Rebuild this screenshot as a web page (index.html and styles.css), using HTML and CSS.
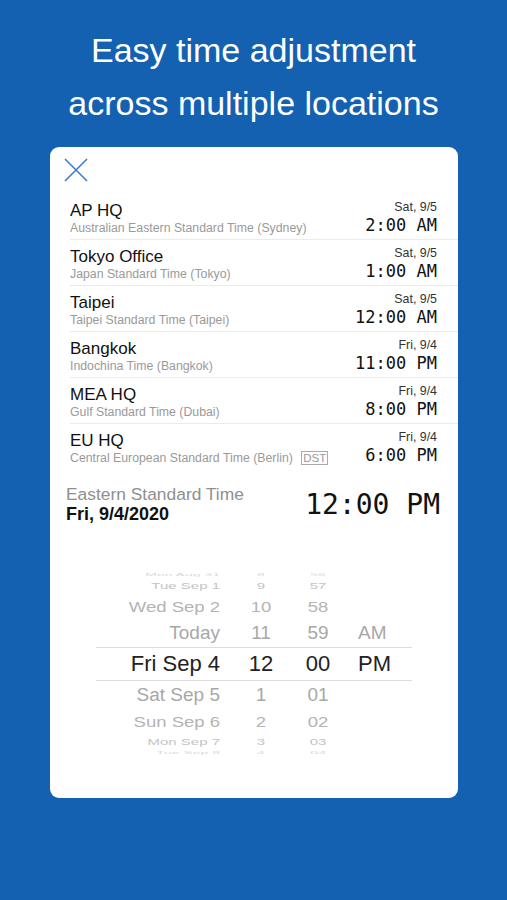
FILE: index.html
```html
<!DOCTYPE html>
<html lang="en">
<head>
    <meta charset="UTF-8">
    <meta name="viewport" content="width=device-width, initial-scale=1.0">
    <title>Time Zones</title>
    <link rel="stylesheet" href="styles.css">
</head>
<body>
    <h1 class="headline">Easy time adjustment<br>across multiple locations</h1>

    <div class="card">
        <div class="card-top">
            <svg class="close" width="24" height="24" viewBox="0 0 24 24">
                <path d="M1 1 L23 23 M23 1 L1 23" stroke="#3f7cc6" stroke-width="1.6" fill="none"/>
            </svg>
        </div>

        <ul class="zones">
            <li class="zone">
                <div class="zone-info">
                    <div class="zone-name">AP HQ</div>
                    <div class="zone-desc">Australian Eastern Standard Time (Sydney)</div>
                </div>
                <div class="zone-clock">
                    <div class="zone-date">Sat, 9/5</div>
                    <div class="zone-time">2:00 AM</div>
                </div>
            </li>
            <li class="zone">
                <div class="zone-info">
                    <div class="zone-name">Tokyo Office</div>
                    <div class="zone-desc">Japan Standard Time (Tokyo)</div>
                </div>
                <div class="zone-clock">
                    <div class="zone-date">Sat, 9/5</div>
                    <div class="zone-time">1:00 AM</div>
                </div>
            </li>
            <li class="zone">
                <div class="zone-info">
                    <div class="zone-name">Taipei</div>
                    <div class="zone-desc">Taipei Standard Time (Taipei)</div>
                </div>
                <div class="zone-clock">
                    <div class="zone-date">Sat, 9/5</div>
                    <div class="zone-time">12:00 AM</div>
                </div>
            </li>
            <li class="zone">
                <div class="zone-info">
                    <div class="zone-name">Bangkok</div>
                    <div class="zone-desc">Indochina Time (Bangkok)</div>
                </div>
                <div class="zone-clock">
                    <div class="zone-date">Fri, 9/4</div>
                    <div class="zone-time">11:00 PM</div>
                </div>
            </li>
            <li class="zone">
                <div class="zone-info">
                    <div class="zone-name">MEA HQ</div>
                    <div class="zone-desc">Gulf Standard Time (Dubai)</div>
                </div>
                <div class="zone-clock">
                    <div class="zone-date">Fri, 9/4</div>
                    <div class="zone-time">8:00 PM</div>
                </div>
            </li>
            <li class="zone last">
                <div class="zone-info">
                    <div class="zone-name">EU HQ</div>
                    <div class="zone-desc">Central European Standard Time (Berlin) <span class="dst">DST</span></div>
                </div>
                <div class="zone-clock">
                    <div class="zone-date">Fri, 9/4</div>
                    <div class="zone-time">6:00 PM</div>
                </div>
            </li>
        </ul>

        <div class="summary">
            <div class="summary-info">
                <div class="summary-zone">Eastern Standard Time</div>
                <div class="summary-date">Fri, 9/4/2020</div>
            </div>
            <div class="summary-time">12:00 PM</div>
        </div>

        <div class="picker">
            <div class="prow edge"><span class="pd">Mon Aug 31</span><span class="ph">8</span><span class="pm">56</span><span class="pa"></span></div>
            <div class="prow far"><span class="pd">Tue Sep 1</span><span class="ph">9</span><span class="pm">57</span><span class="pa"></span></div>
            <div class="prow mid"><span class="pd">Wed Sep 2</span><span class="ph">10</span><span class="pm">58</span><span class="pa"></span></div>
            <div class="prow near"><span class="pd">Today</span><span class="ph">11</span><span class="pm">59</span><span class="pa">AM</span></div>
            <div class="prow selected"><span class="pd">Fri Sep 4</span><span class="ph">12</span><span class="pm">00</span><span class="pa">PM</span></div>
            <div class="prow near"><span class="pd">Sat Sep 5</span><span class="ph">1</span><span class="pm">01</span><span class="pa"></span></div>
            <div class="prow mid"><span class="pd">Sun Sep 6</span><span class="ph">2</span><span class="pm">02</span><span class="pa"></span></div>
            <div class="prow far"><span class="pd">Mon Sep 7</span><span class="ph">3</span><span class="pm">03</span><span class="pa"></span></div>
            <div class="prow edge"><span class="pd">Tue Sep 8</span><span class="ph">4</span><span class="pm">04</span><span class="pa"></span></div>
        </div>
    </div>
</body>
</html>
```

FILE: styles.css
```css
body {
    font-family: "Liberation Sans", Arial, sans-serif;
    margin: 0;
    background-color: #1361b0;
    height: 900px;
    overflow: hidden;
}

.headline {
    margin: 0;
    padding-top: 24px;
    color: #fff;
    font-size: 34px;
    font-weight: normal;
    line-height: 53px;
    text-align: center;
}

.card {
    margin: 17px 49px 0 50px;
    height: 651px;
    background-color: #fff;
    border-radius: 9px;
}

.card-top {
    height: 47px;
    padding: 11px 0 0 14px;
    box-sizing: border-box;
}

.close {
    display: block;
}

.zones {
    list-style-type: none;
    margin: 0;
    padding: 0;
}

.zone {
    margin-left: 20px;
    padding: 6px 21px 0 0;
    height: 46px;
    box-sizing: border-box;
    border-bottom: 1px solid #ebebeb;
    display: flex;
    justify-content: space-between;
}

.zone.last {
    border-bottom: none;
}

.zone-name {
    font-size: 17px;
    line-height: 21px;
    color: #111;
}

.zone-desc {
    font-size: 12.3px;
    line-height: 14px;
    color: #9a9a9a;
}

.dst {
    display: inline-block;
    margin-left: 5px;
    padding: 0 1px;
    font-size: 11.5px;
    line-height: 12px;
    border: 1px solid #aaa;
    color: #999;
}

.zone-clock {
    text-align: right;
}

.zone-date {
    font-size: 12.4px;
    line-height: 15px;
    color: #333;
}

.zone-time {
    font-family: "DejaVu Sans Mono", "Liberation Mono", monospace;
    font-size: 17px;
    line-height: 20px;
    color: #111;
}

.summary {
    margin-top: 14px;
    padding: 0 18px 0 16px;
    display: flex;
    justify-content: space-between;
    align-items: center;
}

.summary-zone {
    font-size: 17.4px;
    line-height: 20px;
    color: #8f8f8f;
}

.summary-date {
    font-size: 18px;
    line-height: 21px;
    font-weight: bold;
    color: #111;
}

.summary-time {
    font-family: "DejaVu Sans Mono", "Liberation Mono", monospace;
    font-size: 28px;
    color: #111;
}

.picker {
    margin-top: 47px;
}

.prow {
    display: grid;
    grid-template-columns: 190px 42px 72px 60px;
    align-items: center;
    color: #a8a8a8;
}

.prow span {
    display: block;
    white-space: nowrap;
}

.pd {
    text-align: right;
    padding-right: 20px;
}

.ph,
.pm {
    text-align: center;
}

.pa {
    padding-left: 4px;
}

.prow.edge {
    height: 6px;
    font-size: 14px;
    line-height: 6px;
    color: #dadada;
}

.prow.edge span {
    transform: scaleY(0.3);
}

.prow.far {
    height: 16px;
    font-size: 15px;
    line-height: 16px;
    color: #c4c4c4;
}

.prow.far span {
    transform: scaleY(0.6);
}

.prow.mid {
    height: 25px;
    font-size: 18.5px;
    line-height: 25px;
    color: #b4b4b4;
}

.prow.mid span {
    transform: scaleY(0.82);
}

.prow.near {
    height: 28px;
    font-size: 19px;
    line-height: 28px;
    color: #a8a8a8;
}

.prow.near span {
    transform: scaleY(0.94);
}

.prow.selected {
    height: 34px;
    font-size: 22px;
    color: #222;
    margin-left: 46px;
    width: 316px;
    grid-template-columns: 144px 42px 72px 58px;
    border-top: 1px solid #dcdcdc;
    border-bottom: 1px solid #dcdcdc;
    box-sizing: border-box;
}
```
